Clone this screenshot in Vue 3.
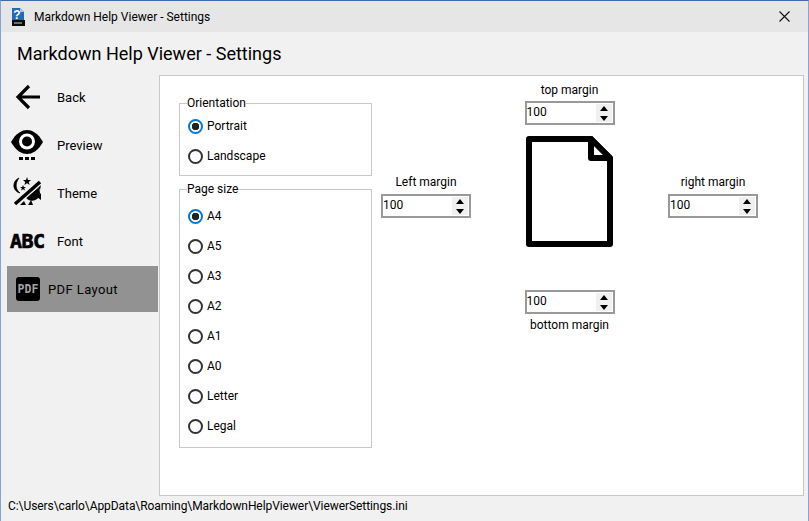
<script setup>
const orientation = [
  { label: 'Portrait', on: true },
  { label: 'Landscape', on: false }
]
const sizes = ['A4', 'A5', 'A3', 'A2', 'A1', 'A0', 'Letter', 'Legal']
</script>

<template>
  <div class="window">
    <div class="titlebar">
      <svg class="app-icon" width="14" height="18" viewBox="0 0 14 18">
        <path d="M1 0H9L13 4V13H1Z" fill="#2468b8" />
        <path d="M9 0L13 4H9Z" fill="#a9c3e6" />
        <rect x="1" y="12" width="13" height="6" fill="#0a0a0a" />
        <rect x="3" y="14" width="8" height="2" fill="#6d6d6d" />
        <text x="6" y="11" font-size="12" font-weight="700" fill="#fff" text-anchor="middle" font-family="Liberation Sans">?</text>
      </svg>
      <span class="title-text">Markdown Help Viewer - Settings</span>
      <svg class="close" width="11" height="11" viewBox="0 0 11 11">
        <path d="M0.5 0.5L10.5 10.5M10.5 0.5L0.5 10.5" stroke="#111" stroke-width="1.1" fill="none" />
      </svg>
    </div>
    <h1 class="heading">Markdown Help Viewer - Settings</h1>
    <div class="body">
      <nav class="side">
        <div class="item">
          <span class="ico">
            <svg width="30" height="26" viewBox="0 0 30 26">
              <path d="M29 13H7M18 2L7 13L18 24" fill="none" stroke="#000" stroke-width="3.2" />
            </svg>
          </span>
          <span class="lbl">Back</span>
        </div>
        <div class="item">
          <span class="ico">
            <svg width="34" height="32" viewBox="0 0 34 32">
              <path d="M0 13C5 4 11 1 16 1S27 4 32 13C27 22 21 25 16 25S5 22 0 13Z" fill="#000" />
              <circle cx="16" cy="12.500" r="8" fill="#fff" />
              <circle cx="16" cy="12.500" r="5" fill="#000" />
              <rect x="8" y="28" width="4" height="3" fill="#000" />
              <rect x="14" y="28" width="4" height="3" fill="#000" />
              <rect x="20" y="28" width="4" height="3" fill="#000" />
            </svg>
          </span>
          <span class="lbl">Preview</span>
        </div>
        <div class="item">
          <span class="ico">
            <svg width="34" height="32" viewBox="0 0 34 32">
              <path d="M8 1C1 4 1 14 9 16C4 12 4 6 8 1Z" fill="#000" stroke="#000" stroke-width="0.8" />
              <path d="M16 0L17 3L20 3L17.800 5L18.600 8L16 6.300L13.400 8L14.200 5L12 3L15 3Z" fill="#000" />
              <path d="M12 8L12.800 10L15 10L13.200 11.300L14 13.500L12 12.200L10 13.500L10.800 11.300L9 10L11.200 10Z" fill="#000" />
              <path d="M27.200 10.600A8 8 0 0 1 14.800 20.800Z" fill="#000" />
              <path d="M25 9L30 8L29 13ZM30 16L30 23L26 20ZM22 28L17 28L20 23ZM15 28L9 28L13 24Z" fill="#000" />
              <path d="M4 27L29 5" stroke="#f1f1f1" stroke-width="6" fill="none" />
              <path d="M4 27L29 5" stroke="#000" stroke-width="3.500" fill="none" />
            </svg>
          </span>
          <span class="lbl">Theme</span>
        </div>
        <div class="item">
          <span class="ico"><span class="abc">ABC</span></span>
          <span class="lbl">Font</span>
        </div>
        <div class="item active">
          <span class="pdf">PDF</span>
          <span class="lbl">PDF Layout</span>
        </div>
      </nav>
      <main class="panel">
        <div class="groups">
          <section class="group first">
            <span class="legend">Orientation</span>
            <div v-for="o in orientation" :key="o.label" class="radio-row">
              <span class="radio" :class="{ on: o.on }"></span>
              <span>{{ o.label }}</span>
            </div>
          </section>
          <section class="group second">
            <span class="legend">Page size</span>
            <div v-for="(s, i) in sizes" :key="s" class="radio-row">
              <span class="radio" :class="{ on: i === 0 }"></span>
              <span>{{ s }}</span>
            </div>
          </section>
        </div>
        <div class="margins">
          <div class="field top">
            <label>top margin</label>
            <div class="spin"><span class="val">100</span><span class="btns"><i class="up"></i><i class="down"></i></span></div>
          </div>
          <div class="field left">
            <label>Left margin</label>
            <div class="spin"><span class="val">100</span><span class="btns"><i class="up"></i><i class="down"></i></span></div>
          </div>
          <svg class="doc" width="88" height="111" viewBox="0 0 88 111">
            <path d="M3 3H65L84 22V108H3Z" fill="#fff" stroke="#000" stroke-width="6" stroke-linejoin="round" />
            <path d="M65 3V22H84Z" fill="#fff" stroke="#000" stroke-width="6" stroke-linejoin="round" />
          </svg>
          <div class="field right">
            <label>right margin</label>
            <div class="spin"><span class="val">100</span><span class="btns"><i class="up"></i><i class="down"></i></span></div>
          </div>
          <div class="field bottom">
            <div class="spin"><span class="val">100</span><span class="btns"><i class="up"></i><i class="down"></i></span></div>
            <label>bottom margin</label>
          </div>
        </div>
      </main>
    </div>
    <footer class="status">C:\Users\carlo\AppData\Roaming\MarkdownHelpViewer\ViewerSettings.ini</footer>
  </div>
</template>

<style>
html, body { margin: 0; padding: 0; overflow: hidden; }
</style>

<style scoped>
.window {
  width: 809px;
  height: 521px;
  box-sizing: border-box;
  background: #f1f1f1;
  border-left: 1px solid #83a5d6;
  border-right: 1px solid #83a5d6;
  border-top: 1px solid #3f69a8;
  display: flex;
  flex-direction: column;
  font-family: Roboto, "Noto Sans", sans-serif;
  font-size: 12px;
  color: #000;
}
.titlebar {
  height: 31px;
  flex: none;
  background: #e6e6e6;
  display: flex;
  align-items: center;
  padding-left: 10px;
}
.app-icon { flex: none; }
.title-text { margin-left: 9px; }
.close { margin-left: auto; margin-right: 18px; }
.heading {
  margin: 0;
  height: 42px;
  flex: none;
  box-sizing: border-box;
  padding: 7px 0 0 16px;
  font-size: 18px;
  line-height: 30px;
  font-weight: 400;
}
.body {
  flex: 1;
  min-height: 0;
  display: flex;
}
.side {
  width: 151px;
  flex: none;
  margin-left: 6px;
  margin-right: 1px;
  display: flex;
  flex-direction: column;
  gap: 2px;
}
.item {
  height: 46px;
  display: flex;
  align-items: center;
}
.lbl {
  font-size: 13px;
  line-height: 18px;
  padding-top: 1px;
}
.ico {
  width: 50px;
  flex: none;
  display: flex;
  align-items: center;
  padding-left: 4px;
  box-sizing: border-box;
}
.abc {
  font-family: "DejaVu Sans Mono", monospace;
  font-weight: 700;
  font-size: 20px;
  line-height: 20px;
  letter-spacing: -0.6px;
  margin-left: -1px;
  -webkit-text-stroke: 0.7px #000;
}
.active { background: #929292; }
.active .lbl { letter-spacing: 0.4px; }
.pdf {
  width: 24px;
  height: 24px;
  margin: 0 8px 0 9px;
  flex: none;
  border-radius: 3px;
  background: #000;
  color: #a3a3a3;
  font-family: "DejaVu Sans Mono", monospace;
  font-weight: 700;
  font-size: 11.500px;
  line-height: 24px;
  text-align: center;
}
.panel {
  flex: none;
  width: 645px;
  height: 421px;
  margin-top: 1px;
  box-sizing: border-box;
  background: #fff;
  border: 1px solid #c8c8c8;
  display: flex;
  padding-left: 19px;
}
.groups {
  width: 193px;
  flex: none;
  padding-top: 27px;
}
.group {
  position: relative;
  box-sizing: border-box;
  border: 1px solid #c8c8c8;
}
.group.first { height: 73px; padding-top: 7px; }
.group.second { height: 259px; margin-top: 13px; padding-top: 11px; }
.legend {
  position: absolute;
  left: 7px;
  top: -10px;
  background: #fff;
  line-height: 18px;
}
.radio-row {
  height: 30px;
  display: flex;
  align-items: center;
  padding-left: 8px;
}
.radio {
  width: 15px;
  height: 15px;
  box-sizing: border-box;
  border: 2px solid #333;
  border-radius: 50%;
  margin-right: 4px;
  flex: none;
  background: #fff;
}
.radio.on {
  border-color: #0078d7;
  background: radial-gradient(circle, #222 0 3.500px, #fff 4px);
}
.margins {
  margin-left: 9px;
  display: grid;
  grid-template-columns: 90px 90px 90px;
  column-gap: 53.500px;
  row-gap: 11px;
  align-content: start;
}
.field { display: flex; flex-direction: column; }
.field label {
  height: 22px;
  line-height: 22px;
  text-align: center;
}
.field.top { grid-column: 2; grid-row: 1; padding-top: 3px; }
.field.left { grid-column: 1; grid-row: 2; margin-top: 35px; }
.field.right { grid-column: 3; grid-row: 2; margin-top: 35px; }
.field.left label, .field.right label { margin-bottom: 1px; }
.field.bottom { grid-column: 2; grid-row: 3; margin-top: 32px; }
.doc { grid-column: 2; grid-row: 2; margin-left: 1px; }
.spin {
  height: 24px;
  box-sizing: border-box;
  border: 2px solid #999;
  background: #fff;
  display: flex;
  align-items: center;
  justify-content: space-between;
}
.val { padding-bottom: 2px; }
.btns {
  width: 16px;
  height: 18px;
  margin-right: 1px;
  background: #f0f0f0;
  display: flex;
  flex-direction: column;
  align-items: center;
  justify-content: center;
  gap: 5px;
}
.btns i { display: block; width: 0; height: 0; border-left: 4.500px solid transparent; border-right: 4.500px solid transparent; }
.btns .up { border-bottom: 5px solid #000; }
.btns .down { border-top: 5px solid #000; }
.status {
  height: 25px;
  flex: none;
  line-height: 20px;
  padding-left: 7px;
  box-sizing: border-box;
  letter-spacing: -0.07px;
}
</style>
